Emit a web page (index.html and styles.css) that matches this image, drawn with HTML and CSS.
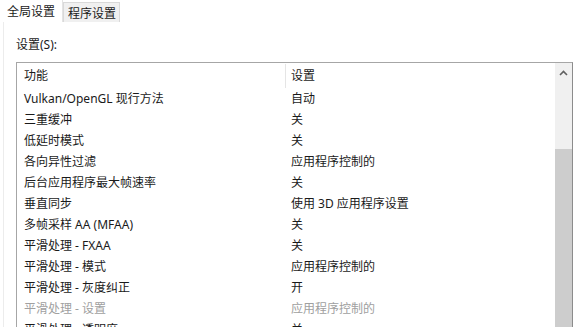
FILE: index.html
```html
<!DOCTYPE html>
<html lang="zh-CN">
<head>
    <meta charset="UTF-8">
    <title>全局设置</title>
    <link rel="stylesheet" href="styles.css">
</head>
<body>
    <div class="tabs">
        <div class="tab active">全局设置</div>
        <div class="tab">程序设置</div>
    </div>
    <div class="panel">
        <div class="label">设置(S):</div>
        <div class="listbox">
            <div class="grid">
                <div class="head">
                    <div class="col-a">功能</div>
                    <div class="col-b sep">设置</div>
                </div>
                <div class="row"><div class="col-a">Vulkan/OpenGL 现行方法</div><div class="col-b">自动</div></div>
                <div class="row"><div class="col-a">三重缓冲</div><div class="col-b">关</div></div>
                <div class="row"><div class="col-a">低延时模式</div><div class="col-b">关</div></div>
                <div class="row"><div class="col-a">各向异性过滤</div><div class="col-b">应用程序控制的</div></div>
                <div class="row"><div class="col-a">后台应用程序最大帧速率</div><div class="col-b">关</div></div>
                <div class="row"><div class="col-a">垂直同步</div><div class="col-b">使用 3D 应用程序设置</div></div>
                <div class="row"><div class="col-a">多帧采样 AA (MFAA)</div><div class="col-b">关</div></div>
                <div class="row"><div class="col-a">平滑处理 - FXAA</div><div class="col-b">关</div></div>
                <div class="row"><div class="col-a">平滑处理 - 模式</div><div class="col-b">应用程序控制的</div></div>
                <div class="row"><div class="col-a">平滑处理 - 灰度纠正</div><div class="col-b">开</div></div>
                <div class="row disabled"><div class="col-a">平滑处理 - 设置</div><div class="col-b">应用程序控制的</div></div>
                <div class="row"><div class="col-a">平滑处理 - 透明度</div><div class="col-b">关</div></div>
            </div>
            <div class="scrollbar">
                <div class="arrow">
                    <svg width="9" height="6" viewBox="0 0 9 6"><path d="M1 5 L4.5 1.5 L8 5" fill="none" stroke="#606060" stroke-width="1.6"/></svg>
                </div>
                <div class="thumb"></div>
            </div>
        </div>
    </div>
</body>
</html>
```

FILE: styles.css
```css
html, body {
    margin: 0;
    height: 100%;
    overflow: hidden;
}

body {
    background: #ffffff;
    font-family: "Noto Sans", "Noto Sans CJK SC", sans-serif;
    font-size: 12px;
    color: #1a1a1a;
}

.tabs {
    display: flex;
    height: 22px;
    align-items: flex-end;
}

.tab {
    height: 20px;
    line-height: 20px;
    padding: 1px 3px 0 4px;
    background: #f0f0f0;
    border: 1px solid #d9d9d9;
    border-bottom: none;
    box-sizing: border-box;
}

.tab.active {
    height: 22px;
    line-height: 22px;
    width: 63px;
    padding-left: 7px;
    background: #ffffff;
    border: none;
    border-right: 1px solid #e3e3e3;
}

.panel {
    border-left: 1px solid #ececec;
    margin-left: 3px;
    padding: 0 0 0 12px;
}

.label {
    height: 40px;
    line-height: 22px;
    padding-top: 12px;
    box-sizing: border-box;
}

.listbox {
    display: flex;
    width: 557px;
    height: 320px;
    border: 1px solid #a6a6a6;
    border-right-color: #8c8c8c;
    box-sizing: border-box;
}

.grid {
    flex: 1;
}

.head, .row {
    display: flex;
    box-sizing: border-box;
    padding-top: 1px;
}

.head {
    height: 25px;
    line-height: 24px;
}

.row {
    height: 21px;
    line-height: 20px;
}

.col-a {
    width: 261px;
    padding-left: 7px;
}

.col-b {
    padding-left: 6px;
}

.sep {
    border-left: 1px solid #e5e5e5;
    padding-left: 5px;
}

.disabled {
    color: #a0a0a0;
}

.scrollbar {
    width: 17px;
    background: #f0f0f0;
    display: flex;
    flex-direction: column;
}

.arrow {
    height: 20px;
    display: flex;
    align-items: center;
    justify-content: center;
}

.thumb {
    margin-top: 66px;
    flex: 1;
    background: #cdcdcd;
}
```
